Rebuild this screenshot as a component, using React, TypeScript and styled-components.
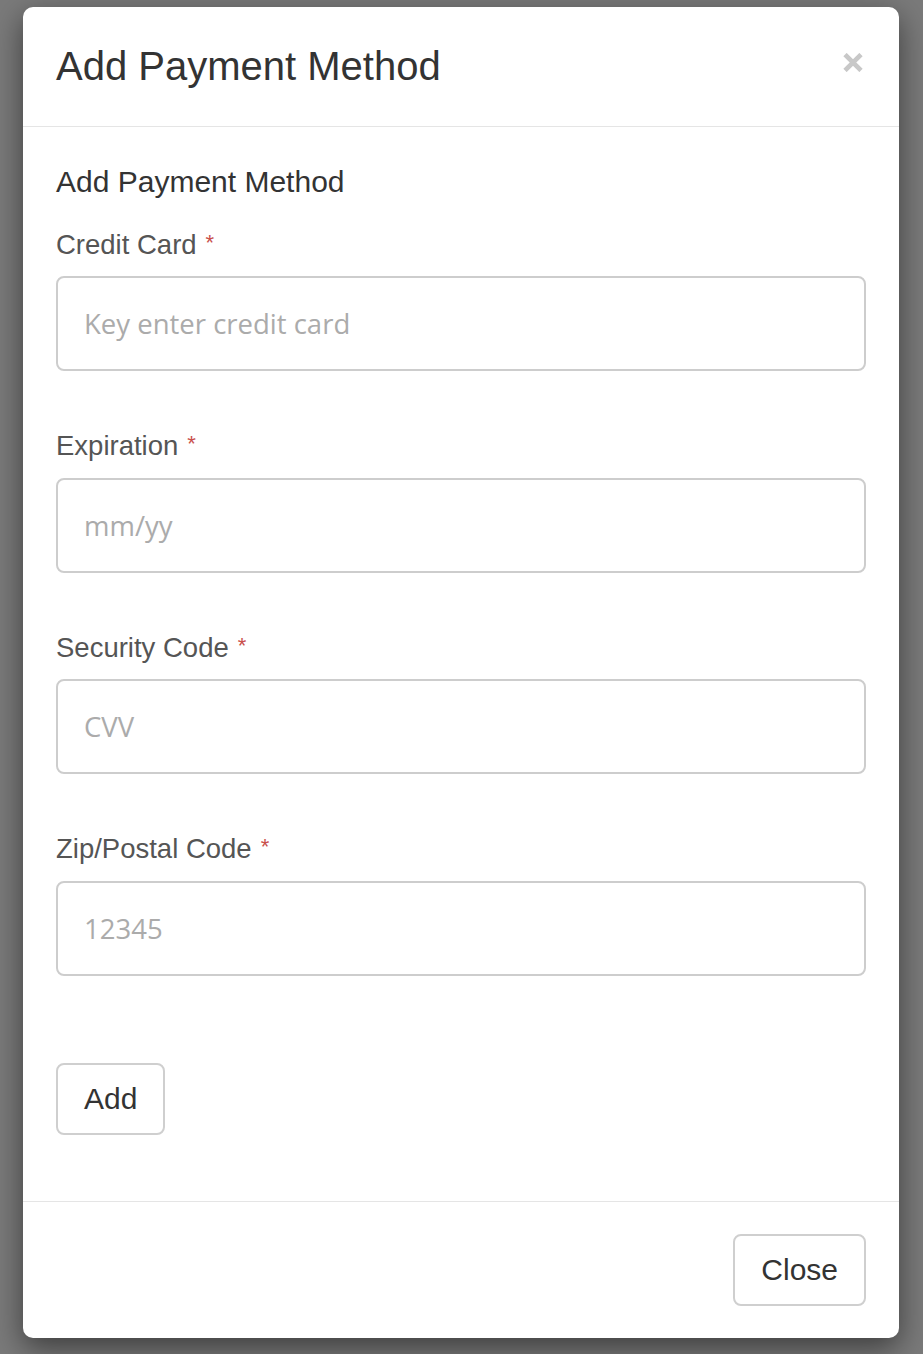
import React from "react";
import styled, { createGlobalStyle } from "styled-components";

const GlobalStyle = createGlobalStyle`
  html, body {
    margin: 0;
    padding: 0;
    background: #7a7a7a;
  }
  body {
    font-family: "Liberation Sans", Arial, sans-serif;
    min-height: 1354px;
  }
  * { box-sizing: border-box; }
`;

const Backdrop = styled.div`
  min-height: 1354px;
  padding: 7px 0 0 23px;
  background: #7a7a7a;
`;

const Dialog = styled.div`
  width: 876px;
  background: #fff;
  border-radius: 10px;
  box-shadow: 0 10px 30px rgba(0, 0, 0, 0.5);
  display: flex;
  flex-direction: column;
  overflow: hidden;
`;

const Header = styled.div`
  display: flex;
  justify-content: space-between;
  align-items: flex-start;
  padding: 37px 36px 38px 33px;
  border-bottom: 1px solid #e5e5e5;
`;

const Title = styled.h4`
  margin: 0;
  font-size: 40px;
  line-height: 44px;
  font-weight: 400;
  color: #333;
`;

const CloseX = styled.button`
  border: 0;
  background: transparent;
  padding: 0;
  margin-top: 9px;
  width: 20px;
  height: 19px;
  display: flex;
  cursor: pointer;
`;

const Body = styled.div`
  padding: 36.6px 33px 66px;
  display: flex;
  flex-direction: column;
`;

const Subtitle = styled.div`
  font-size: 30px;
  line-height: 36px;
  color: #333;
  margin-bottom: 28px;
`;

const Form = styled.form`
  display: flex;
  flex-direction: column;
  gap: 58px;
`;

const Group = styled.div`
  display: flex;
  flex-direction: column;
  gap: 15.5px;
`;

const Label = styled.label`
  display: block;
  height: 33px;
  font-size: 27.5px;
  line-height: 33px;
  color: #555;
`;

const Required = styled.span`
  color: #c9504c;
  font-size: 22px;
  line-height: 0;
  vertical-align: 4px;
  margin-left: 9px;
`;

const Input = styled.input`
  display: block;
  width: 100%;
  height: 95px;
  border: 2px solid #cdcdcd;
  border-radius: 8px;
  padding: 0 26px;
  font-family: "Open Sans", "Liberation Sans", sans-serif;
  font-size: 27.5px;
  color: #333;
  background: #fff;
  outline: none;
  &::placeholder {
    color: #ababab;
  }
`;

const Button = styled.button`
  font-family: "Liberation Sans", Arial, sans-serif;
  font-size: 30px;
  line-height: 42px;
  color: #333;
  background: #fff;
  border: 2px solid #cfcfcf;
  border-radius: 8px;
  padding: 13px 26px;
  cursor: pointer;
`;

const AddRow = styled.div`
  margin-top: 87px;
  display: flex;
`;

const Footer = styled.div`
  border-top: 1px solid #e5e5e5;
  padding: 32px 33px;
  display: flex;
  justify-content: flex-end;
`;

const fields = [
  { label: "Credit Card", placeholder: "Key enter credit card" },
  { label: "Expiration", placeholder: "mm/yy" },
  { label: "Security Code", placeholder: "CVV" },
  { label: "Zip/Postal Code", placeholder: "12345" },
];

export default function App() {
  return (
    <>
      <GlobalStyle />
      <Backdrop>
        <Dialog role="dialog">
          <Header>
            <Title>Add Payment Method</Title>
            <CloseX aria-label="Close">
              <svg width="20" height="19" viewBox="0 0 20 19">
                <path d="M2 1.5 L18 17.5 M18 1.5 L2 17.5" stroke="#c8c8c8" strokeWidth="4.6" strokeLinecap="butt" fill="none" />
              </svg>
            </CloseX>
          </Header>
          <Body>
            <Subtitle>Add Payment Method</Subtitle>
            <Form onSubmit={(e) => e.preventDefault()}>
              {fields.map((f) => (
                <Group key={f.label}>
                  <Label>
                    {f.label}
                    <Required>*</Required>
                  </Label>
                  <Input placeholder={f.placeholder} />
                </Group>
              ))}
            </Form>
            <AddRow>
              <Button type="button">Add</Button>
            </AddRow>
          </Body>
          <Footer>
            <Button type="button">Close</Button>
          </Footer>
        </Dialog>
      </Backdrop>
    </>
  );
}
